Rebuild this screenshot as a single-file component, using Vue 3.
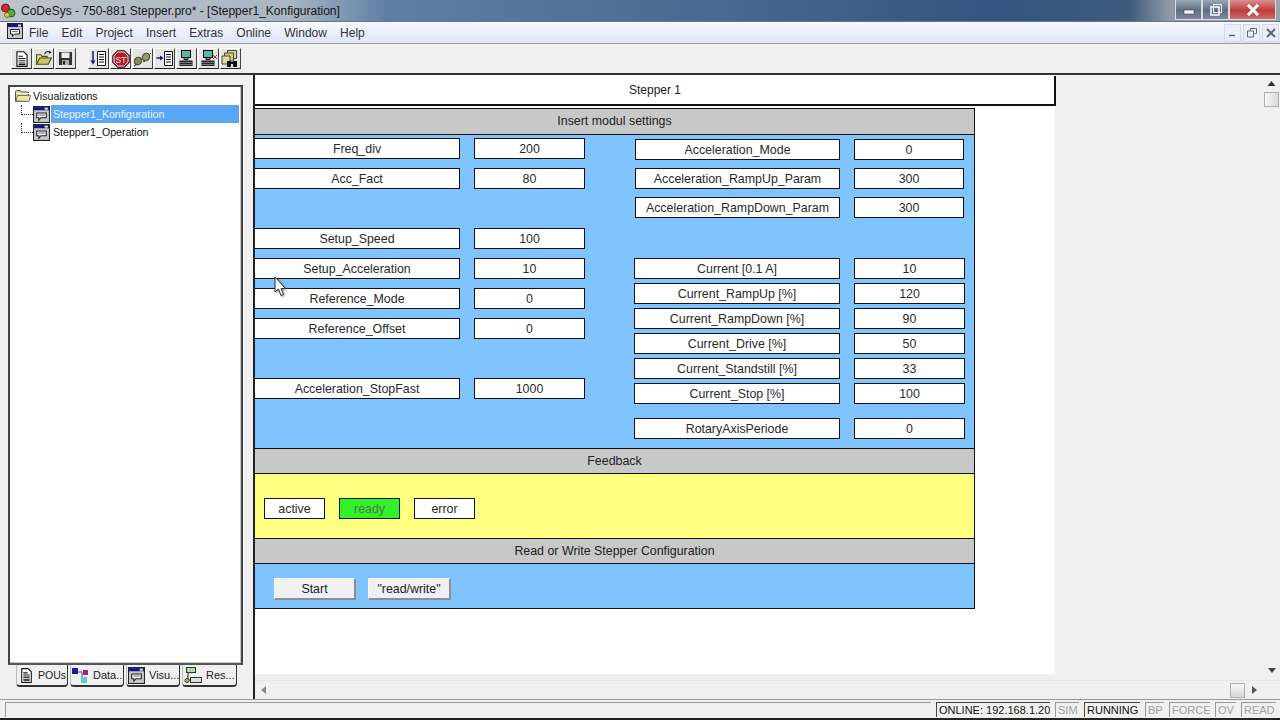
<template>
  <div class="app">
    <svg class="defs" width="0" height="0">
      <symbol id="ic-vis" viewBox="0 0 16 16">
        <rect x="0.5" y="0.5" width="15" height="15" fill="#c8c8c8" stroke="#222" />
        <rect x="1" y="1" width="14" height="3" fill="#14148c" />
        <rect x="11" y="1.5" width="3" height="2" fill="#ddd" />
        <path d="M3.5 6.5h9v4.500h-5l-2 2.500v-2.500h-2z" fill="#f4f4f4" stroke="#222" />
        <path d="M5 8.500h6" stroke="#777" />
      </symbol>
      <symbol id="ic-doc" viewBox="0 0 16 16">
        <path d="M3.500 1.500h6l3 3v10h-9z" fill="#fff" stroke="#111" />
        <path d="M5 5.500h4M5 7.500h6M5 9.500h6M5 11.500h6M5 13h6" stroke="#111" />
      </symbol>
    </svg>

    <header class="titlebar">
      <svg class="logo" width="16" height="18" viewBox="0 0 16 18">
        <circle cx="4.500" cy="6" r="4" fill="#d8262c" stroke="#7a1015" />
        <circle cx="10" cy="11" r="4" fill="#4cae3c" stroke="#1d5c18" />
        <circle cx="6" cy="13" r="2.500" fill="#e8cf3a" stroke="#7c6a10" />
      </svg>
      <span class="title-text">CoDeSys - 750-881 Stepper.pro* - [Stepper1_Konfiguration]</span>
      <div class="win-btns">
        <div class="win-btn">
          <svg width="12" height="10" viewBox="0 0 12 10"><rect x="1" y="5" width="10" height="4" fill="#f2f4f6" stroke="#334" stroke-width="0.5" /></svg>
        </div>
        <div class="win-btn">
          <svg width="12" height="12" viewBox="0 0 12 12"><rect x="3.500" y="0.500" width="8" height="8" fill="none" stroke="#e8eaec" /><rect x="1" y="3" width="8" height="8" fill="none" stroke="#f4f6f8" stroke-width="1.600" /></svg>
        </div>
        <div class="win-btn close">
          <svg width="14" height="12" viewBox="0 0 14 12"><path d="M2 1l10 10M12 1L2 11" stroke="#fff" stroke-width="3" /></svg>
        </div>
      </div>
    </header>

    <nav class="menubar">
      <svg class="menu-icon" width="16" height="16"><use href="#ic-vis" /></svg>
      <span v-for="m in menus" :key="m" class="menu-item">{{ m }}</span>
      <div class="mdi-btns">
        <div class="mdi-btn"><svg width="9" height="9" viewBox="0 0 9 9"><path d="M1 7.500h6" stroke="#667" stroke-width="1.500" /></svg></div>
        <div class="mdi-btn"><svg width="10" height="10" viewBox="0 0 10 10"><path d="M3.500 2.500v-2h6v5h-2M0.500 3h6v6h-6z" fill="none" stroke="#667" /></svg></div>
        <div class="mdi-btn"><svg width="10" height="10" viewBox="0 0 10 10"><path d="M1 1l8 8M9 1L1 9" stroke="#667" stroke-width="2" /></svg></div>
      </div>
    </nav>

    <div class="toolbar">
      <div class="tool-group">
        <div class="tool">
          <svg width="18" height="18"><use href="#ic-doc" /></svg>
        </div>
        <div class="tool">
          <svg width="18" height="17" viewBox="0 0 17 16">
            <path d="M1.500 13.500v-9h4l1 1.500h5v2" fill="#e8e08c" stroke="#4a4a1a" />
            <path d="M1.500 13.500l3-6h11l-3 6z" fill="#cfc766" stroke="#4a4a1a" />
            <path d="M9 4c1-2.500 3-3 5-2" fill="none" stroke="#222" />
            <path d="M14 0.500l1.500 2-2.500 1z" fill="#222" />
          </svg>
        </div>
        <div class="tool">
          <svg width="15" height="15" viewBox="0 0 15 15">
            <path d="M1 1h13v13H1z" fill="#333" />
            <rect x="3.500" y="1.500" width="8" height="5.500" fill="#eee" />
            <rect x="4" y="9" width="7" height="5" fill="#aaa" />
            <rect x="5" y="10" width="2" height="3.500" fill="#222" />
          </svg>
        </div>
      </div>
      <div class="tool-group second">
        <div class="tool">
          <svg width="17" height="17" viewBox="0 0 17 17">
            <path d="M3 1v12" stroke="#14148c" stroke-width="1.500" />
            <path d="M0.500 10.500L3 14.500l2.500-4z" fill="#14148c" />
            <path d="M7.500 1.500h8v14h-8z" fill="#fff" stroke="#111" />
            <path d="M9 4.500h5M9 7h5M9 9.500h5M9 12h5" stroke="#111" />
          </svg>
        </div>
        <div class="tool">
          <svg width="18" height="18" viewBox="0 0 18 18">
            <path d="M5.500 0.500h7l5 5v7l-5 5h-7l-5-5v-7z" fill="#b01c2c" stroke="#444" />
            <path d="M6 2h6l4 4v6l-4 4H6l-4-4V6z" fill="none" stroke="#f0d8d8" />
            <text x="9" y="12.500" class="stop-text">ST</text>
          </svg>
        </div>
        <div class="tool">
          <svg width="19" height="16" viewBox="0 0 19 16">
            <ellipse cx="5" cy="10" rx="3.500" ry="4" transform="rotate(35 5 10)" fill="#8a8a58" stroke="#3a3a20" />
            <ellipse cx="13" cy="6" rx="3.500" ry="4" transform="rotate(35 13 6)" fill="#9a9a68" stroke="#3a3a20" />
            <path d="M1 15l2-1M10 11l2-1M17 3l1-1" stroke="#3a3a20" />
          </svg>
        </div>
        <div class="tool">
          <svg width="18" height="17" viewBox="0 0 18 17">
            <path d="M0.500 8h5" stroke="#14148c" stroke-width="1.500" />
            <path d="M4 5.500L7.500 8 4 10.500z" fill="#14148c" />
            <path d="M8.500 1.500h8v14h-8z" fill="#fff" stroke="#111" />
            <path d="M10 4.500h5M10 7h5M10 9.500h5M10 12h5" stroke="#111" />
          </svg>
        </div>
        <div class="tool" v-for="n in 2" :key="n">
          <svg width="18" height="17" viewBox="0 0 18 17">
            <rect x="3.500" y="0.500" width="9" height="7" fill="#5fb4b0" stroke="#111" />
            <path d="M6 8v1.500h4V8" fill="#999" stroke="#111" />
            <rect x="1.500" y="10.500" width="13" height="5.500" fill="#222" />
            <path d="M2.500 12.500h11M2.500 14.500h11" stroke="#ccc" stroke-dasharray="1 1" />
            <path v-if="n === 2" d="M13 5l4 4M17 5l-4 4" stroke="#a33" />
          </svg>
        </div>
        <div class="tool">
          <svg width="19" height="19" viewBox="0 0 19 19">
            <path d="M6.500 1.500h9v8h-9z" fill="#d8d490" stroke="#444" />
            <path d="M3.500 4h9v8h-9z" fill="#cfcb80" stroke="#444" />
            <path d="M1 7h8v8H1z" fill="#e0dc9c" stroke="#444" />
            <rect x="6" y="12" width="4" height="6" fill="#111" />
            <rect x="12" y="12" width="4" height="6" fill="#111" />
            <rect x="9" y="13" width="4" height="2" fill="#111" />
          </svg>
        </div>
      </div>
    </div>

    <main class="workspace">
      <aside class="side">
        <div class="tree">
          <div class="tree-root">
            <svg width="17" height="14" viewBox="0 0 17 14">
              <path d="M1.500 12.500v-10l1-1h4l1 1.500h7v9.500z" fill="#dcd68a" stroke="#555" />
              <path d="M2.500 4.500h12.500" stroke="#fff" />
              <path d="M2 12l1.500-5.500h13L15 12.500z" fill="#ece6a0" stroke="#777" />
            </svg>
            <span>Visualizations</span>
          </div>
          <div v-for="(t, i) in treeItems" :key="t" class="tree-row">
            <span class="twig"></span>
            <svg width="17" height="17"><use href="#ic-vis" /></svg>
            <span class="tree-label" :class="{ selected: i === 0 }">{{ t }}</span>
          </div>
        </div>
        <div class="tabs">
          <div class="tab tab-pou">
            <svg width="17" height="17"><use href="#ic-doc" /></svg>
            <span>POUs</span>
          </div>
          <div class="tab tab-data">
            <svg width="17" height="15" viewBox="0 0 17 15">
              <path d="M5 4h5M10 4v6" stroke="#555" fill="none" />
              <rect x="0" y="0" width="6" height="6" fill="#1c1ca0" />
              <rect x="11" y="2" width="5" height="5" fill="#a0208c" />
              <rect x="9" y="9" width="6" height="6" fill="#50d0d0" />
            </svg>
            <span>Data..</span>
          </div>
          <div class="tab tab-vis">
            <svg width="17" height="17"><use href="#ic-vis" /></svg>
            <span>Visu...</span>
          </div>
          <div class="tab tab-res">
            <svg width="18" height="16" viewBox="0 0 18 16">
              <rect x="2.500" y="0.500" width="9" height="5" fill="#b8d8a8" stroke="#333" />
              <rect x="6.500" y="10.500" width="11" height="5" fill="#ddd" stroke="#333" />
              <path d="M4 6v7h2.500M4 9.500h-1" stroke="#333" fill="none" />
              <circle cx="3" cy="13.500" r="2" fill="#c8c070" stroke="#333" />
            </svg>
            <span>Res...</span>
          </div>
        </div>
      </aside>

      <section class="editor">
        <div class="viewport">
          <div class="page">
            <div class="page-title">Stepper 1</div>
            <div class="panel">
              <div class="band-head settings-head">Insert modul settings</div>
              <div class="settings">
                <div class="left-col">
                  <template v-for="(f, i) in leftFields" :key="i">
                    <div v-if="f" class="row">
                      <div class="box">{{ f[0] }}</div>
                      <div class="box">{{ f[1] }}</div>
                    </div>
                    <div v-else class="row-gap"></div>
                  </template>
                </div>
                <div class="right-col">
                  <div class="group accel">
                    <div v-for="f in accelFields" :key="f[0]" class="row">
                      <div class="box">{{ f[0] }}</div>
                      <div class="box">{{ f[1] }}</div>
                    </div>
                  </div>
                  <div class="group current">
                    <div v-for="f in currentFields" :key="f[0]" class="row">
                      <div class="box">{{ f[0] }}</div>
                      <div class="box">{{ f[1] }}</div>
                    </div>
                  </div>
                  <div class="group rotary">
                    <div class="row">
                      <div class="box">RotaryAxisPeriode</div>
                      <div class="box">0</div>
                    </div>
                  </div>
                </div>
              </div>
              <div class="band-head">Feedback</div>
              <div class="feedback">
                <div class="box lamp">active</div>
                <div class="box lamp on">ready</div>
                <div class="box lamp">error</div>
              </div>
              <div class="band-head">Read or Write Stepper Configuration</div>
              <div class="actions">
                <div class="action">Start</div>
                <div class="action">"read/write"</div>
              </div>
            </div>
          </div>
        </div>
        <div class="vscroll">
          <svg width="9" height="5" viewBox="0 0 8 5"><path d="M4 0l4 5H0z" fill="#333" /></svg>
          <div class="vthumb"></div>
          <svg class="down" width="8" height="5" viewBox="0 0 8 5"><path d="M0 0h8L4 5z" fill="#444" /></svg>
        </div>
        <div class="hscroll">
          <svg width="5" height="8" viewBox="0 0 5 8"><path d="M5 0v8L0 4z" fill="#888" /></svg>
          <div class="hthumb"></div>
          <svg width="5" height="8" viewBox="0 0 5 8"><path d="M0 0v8l5-4z" fill="#555" /></svg>
        </div>
      </section>
    </main>

    <footer class="statusbar">
      <div class="status-main"></div>
      <div v-for="s in statusCells" :key="s.text" class="cell" :class="{ lit: s.lit }" :style="{ width: s.w + 'px' }">{{ s.text }}</div>
    </footer>

    <svg class="cursor" width="14" height="21" viewBox="0 0 14 21">
      <path d="M1 1v15l3.500-3 2.500 6.500 2.500-1-2.500-6h4.500z" fill="#fff" stroke="#333" />
    </svg>
  </div>
</template>

<script setup>
const menus = ['File', 'Edit', 'Project', 'Insert', 'Extras', 'Online', 'Window', 'Help']
const treeItems = ['Stepper1_Konfiguration', 'Stepper1_Operation']

// null = empty slot in the visu grid
const leftFields = [
  ['Freq_div', 200],
  ['Acc_Fact', 80],
  null,
  ['Setup_Speed', 100],
  ['Setup_Acceleration', 10],
  ['Reference_Mode', 0],
  ['Reference_Offset', 0],
  null,
  ['Acceleration_StopFast', 1000]
]
const accelFields = [
  ['Acceleration_Mode', 0],
  ['Acceleration_RampUp_Param', 300],
  ['Acceleration_RampDown_Param', 300]
]
const currentFields = [
  ['Current [0.1 A]', 10],
  ['Current_RampUp [%]', 120],
  ['Current_RampDown [%]', 90],
  ['Current_Drive [%]', 50],
  ['Current_Standstill [%]', 33],
  ['Current_Stop [%]', 100]
]
const statusCells = [
  { text: 'ONLINE: 192.168.1.20', w: 114, lit: true },
  { text: 'SIM', w: 24 },
  { text: 'RUNNING', w: 56, lit: true },
  { text: 'BP', w: 19 },
  { text: 'FORCE', w: 41 },
  { text: 'OV', w: 21 },
  { text: 'READ', w: 35 }
]
</script>

<style scoped>
.app {
  position: relative;
  width: 1280px;
  height: 720px;
  overflow: hidden;
  display: flex;
  flex-direction: column;
  background: #f0f0f0;
  font-family: "Liberation Sans", Arial, sans-serif;
  font-size: 12px;
  color: #222;
}
.defs { position: absolute; }

.titlebar {
  flex: 0 0 22px;
  display: flex;
  align-items: center;
  padding-left: 1px;
  background: linear-gradient(90deg, #bcc4cc 0, #a9b6c3 290px, #5f80a5 385px, #33547e 1000px, #3f5c7e 1130px, #8f9aa5 1170px, #9aa4ae 100%);
  border-bottom: 1px solid #5f7890;
  box-sizing: border-box;
}
.logo { margin-right: 4px; }
.title-text { font-size: 12px; color: #161616; }
.win-btns { margin-left: auto; margin-right: 4px; display: flex; align-self: flex-start; }
.win-btn {
  width: 27px;
  height: 20px;
  display: grid;
  place-items: center;
  box-sizing: border-box;
  border: 1px solid #d8dde2;
  border-top: 0;
  background: linear-gradient(#9aa6b2, #5e6f80 55%, #7c8a98);
}
.win-btn.close { width: 47px; background: linear-gradient(#d89090, #c03c3c 55%, #d06a6a); }

.menubar {
  flex: 0 0 22px;
  display: flex;
  align-items: center;
  padding-left: 7px;
  box-sizing: border-box;
  background: linear-gradient(#f8f9fd, #dfe3f6);
  border-bottom: 1px solid #9a9a9a;
}
.menu-icon { margin-right: 6px; margin-top: -3px; }
.menu-item { margin-right: 13.200px; color: #333; }
.mdi-btns { margin-left: auto; margin-right: 1px; display: flex; gap: 2px; }
.mdi-btn {
  width: 17px;
  height: 18px;
  display: grid;
  place-items: center;
  background: #e9eefa;
  border: 1px solid #d4dbe8;
  box-sizing: border-box;
}

.toolbar {
  flex: 0 0 31px;
  display: flex;
  align-items: flex-start;
  padding: 4px 0 0 11px;
  box-sizing: border-box;
  border-bottom: 2px solid #333;
}
.tool-group { display: flex; gap: 1px; }
.tool-group.second { margin-left: 12px; }
.tool {
  width: 21px;
  height: 21px;
  display: grid;
  place-items: center;
  background: #e4e4e4;
  border-top: 1px solid #fff;
  border-left: 1px solid #fff;
  border-right: 1px solid #444;
  border-bottom: 1px solid #222;
  box-sizing: border-box;
}
.stop-text { font-size: 8.500px; fill: #f4e0e0; text-anchor: middle; font-family: "Liberation Sans", sans-serif; }

.workspace { flex: 1; min-height: 0; display: flex; }

.side {
  width: 253px;
  padding: 10px 0 0 8px;
  box-sizing: border-box;
  border-right: 2px solid #222;
  flex: 0 0 255px;
}
.tree {
  width: 235px;
  height: 580px;
  box-sizing: border-box;
  background: #fff;
  border: 2px solid #444;
  border-bottom-color: #555;
  padding: 0 0 0 3px;
  box-shadow: inset -1px -1px 0 #c8c8c8;
  font-size: 10.600px;
  color: #111;
}
.tree-root {
  height: 18px;
  display: flex;
  align-items: center;
  gap: 2px;
  padding-left: 1px;
}
.tree-row {
  height: 18px;
  display: flex;
  align-items: center;
  padding-left: 8px;
}
.twig {
  width: 12px;
  height: 10px;
  align-self: flex-start;
  border-left: 1px dotted #333;
  border-bottom: 1px dotted #333;
  box-sizing: border-box;
}
.tree-label {
  flex: 0 0 188px;
  height: 18px;
  line-height: 18px;
  margin-left: 1px;
  padding-left: 2px;
  box-sizing: border-box;
  color: #111;
}
.tree-label.selected { background: #59a7f2; color: #e6f2ff; }

.tabs { display: flex; margin-left: 8px; gap: 2px; font-size: 11px; }
.tab {
  height: 22px;
  display: flex;
  align-items: center;
  gap: 4px;
  box-sizing: border-box;
  padding-left: 1px;
  border-left: 1px solid #bbb;
  border-right: 1px solid #333;
  border-bottom: 2px solid #333;
  border-radius: 0 0 4px 4px;
  white-space: nowrap;
  overflow: hidden;
}
.tab svg { flex: none; }
.tab-pou { width: 52px; gap: 3px; font-size: 10.500px; }
.tab-data { width: 54px; }
.tab-vis { width: 54px; }
.tab-res { width: 55px; }

.editor {
  flex: 1;
  min-width: 0;
  display: grid;
  grid-template-columns: 1fr 17px;
  grid-template-rows: 1fr 19px;
}
.viewport { overflow: hidden; min-height: 0; }
.page {
  width: 800px;
  height: 599px;
  background: #fff;
  padding-top: 1px;
  box-sizing: border-box;
  font-size: 12.400px;
}
.page-title {
  width: 803px;
  height: 30px;
  margin-left: -2px;
  box-sizing: border-box;
  border: 2px solid #111;
  border-top-width: 0;
  display: grid;
  place-items: center;
  padding-left: 2px;
  padding-right: 1px;
  background: #fff;
  font-size: 12px;
}
.panel {
  width: 720px;
  margin-top: 2px;
  box-sizing: border-box;
  border-right: 1px solid #111;
  border-bottom: 1px solid #111;
}
.band-head {
  height: 25px;
  box-sizing: border-box;
  border-top: 1px solid #111;
  background: #c8c8c8;
  display: grid;
  place-items: center;
}
.settings-head { height: 26px; padding-bottom: 1px; }
.settings {
  height: 314px;
  box-sizing: border-box;
  border-top: 1px solid #111;
  background: #80c4ff;
  display: flex;
  padding-top: 3px;
}
.left-col {
  margin-left: -1px;
  display: flex;
  flex-direction: column;
  gap: 9px;
}
.row { display: flex; gap: 14px; }
.row-gap { height: 21px; }
.box {
  height: 21px;
  box-sizing: border-box;
  border: 1px solid #111;
  background: #fff;
  display: grid;
  place-items: center;
  color: #2a2a2a;
}
.left-col .box:first-child { width: 206px; }
.left-col .box:last-child { width: 111px; }

.right-col { margin-left: 49px; }
.group { display: flex; flex-direction: column; }
.group .box:first-child { width: 206px; }
.group .box:last-child { width: 111px; }
.accel { margin: 1px 0 0 1px; gap: 8px; }
.accel .box:first-child { width: 205px; }
.accel .box:last-child { width: 110px; }
.current { margin-top: 40px; gap: 4px; }
.rotary { margin-top: 14px; }

.feedback {
  height: 65px;
  box-sizing: border-box;
  border-top: 1px solid #111;
  background: #ffff80;
  display: flex;
  gap: 14px;
  padding: 24px 0 0 9px;
}
.lamp { width: 61px; }
.lamp.on { background: #33f02a; color: #4f7a48; }

.actions {
  height: 45px;
  box-sizing: border-box;
  border-top: 1px solid #111;
  background: #80c4ff;
  display: flex;
  gap: 12px;
  padding: 14px 0 0 19px;
}
.action {
  width: 82px;
  height: 22px;
  display: grid;
  place-items: center;
  background: #f0f0f0;
  box-sizing: border-box;
  border-top: 1px solid #fafafa;
  border-left: 1px solid #fafafa;
  border-right: 2px solid #8a8f96;
  border-bottom: 2px solid #8a8f96;
}
.action:last-child { width: 83px; }

.vscroll {
  display: flex;
  flex-direction: column;
  align-items: center;
  padding-top: 6px;
}
.vscroll svg { flex: none; }
.vthumb {
  flex: none;
  width: 15px;
  height: 15px;
  margin-top: 6px;
  box-sizing: border-box;
  border: 1px solid #b0b0b0;
  background: linear-gradient(90deg, #f6f6f6, #d8d8d8);
}
.vscroll .down { margin-top: auto; margin-bottom: 7px; }
.hscroll {
  grid-column: 1 / 3;
  display: flex;
  align-items: center;
  padding-left: 6px;
  padding-right: 23px;
  border-top: 1px solid #e4e4e4;
  box-sizing: border-box;
}
.hthumb {
  margin-left: auto;
  margin-right: 7px;
  width: 15px;
  height: 15px;
  box-sizing: border-box;
  border: 1px solid #b0b0b0;
  background: linear-gradient(#f6f6f6, #d8d8d8);
}

.statusbar {
  flex: 0 0 21px;
  display: flex;
  gap: 5px;
  padding: 2px 4px 0 5px;
  box-sizing: border-box;
  border-top: 1px solid #999;
  border-bottom: 2px solid #222;
  color: #a0a0a0;
  font-size: 11px;
}
.status-main {
  flex: none;
  width: 926px;
  height: 15px;
  border-left: 1px solid #999;
  border-top: 1px solid #999;
  box-sizing: border-box;
}
.cell {
  flex: none;
  height: 15px;
  line-height: 15px;
  box-sizing: border-box;
  padding-left: 2px;
  border-left: 1px solid #999;
  border-top: 1px solid #999;
  white-space: nowrap;
  overflow: hidden;
}
.cell.lit { color: #111; border-color: #444; }

.cursor { position: absolute; left: 274px; top: 276px; filter: drop-shadow(1px 1px 1px rgba(0, 0, 0, 0.4)); }
</style>

<style>
html, body { margin: 0; overflow: hidden; }
</style>
